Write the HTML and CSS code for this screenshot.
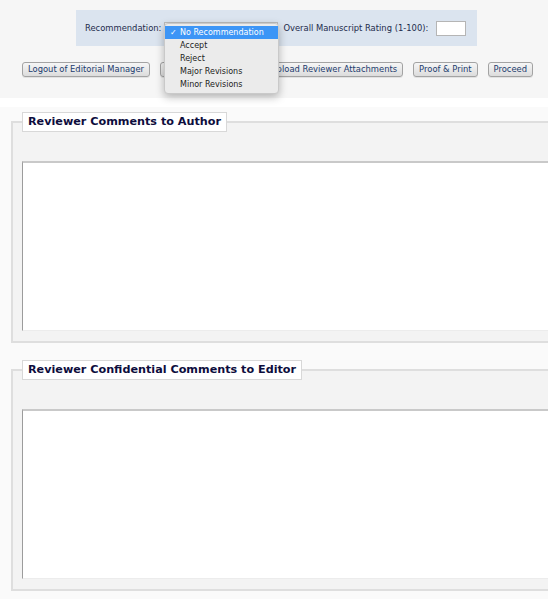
FILE: index.html
```html
<!DOCTYPE html>
<html>
<head>
<meta charset="utf-8">
<link rel="stylesheet" href="styles.css">
</head>
<body>
<div class="header">
  <div class="rec-bar">
    <span class="label">Recommendation:</span>
    <select class="rec-select"><option>No Recommendation</option></select>
    <span class="label rating-label">Overall Manuscript Rating (1-100):</span>
    <input class="rating" type="text">
  </div>
  <div class="btn-row">
    <button class="btn">Logout of Editorial Manager</button>
    <button class="btn btn-narrow">Save &amp; Submit Later</button>
    <button class="btn">Upload Reviewer Attachments</button>
    <button class="btn">Proof &amp; Print</button>
    <button class="btn">Proceed</button>
  </div>
  <div class="menu">
    <div class="item selected"><span class="check">✓</span>No Recommendation</div>
    <div class="item">Accept</div>
    <div class="item">Reject</div>
    <div class="item">Major Revisions</div>
    <div class="item">Minor Revisions</div>
  </div>
</div>
<div class="gap"></div>
<div class="content">
  <fieldset class="box">
    <legend class="title">Reviewer Comments to Author</legend>
    <textarea class="comments"></textarea>
  </fieldset>
  <fieldset class="box">
    <legend class="title">Reviewer Confidential Comments to Editor</legend>
    <textarea class="comments"></textarea>
  </fieldset>
</div>
</body>
</html>
```
FILE: styles.css
```css
html, body {
  margin: 0;
  padding: 0;
  overflow: hidden;
  background: #fafafa;
  font-family: "DejaVu Sans", Verdana, sans-serif;
}
.header {
  position: relative;
  height: 98px;
  background: #f6f6f6;
  padding-top: 10px;
  box-sizing: border-box;
}
.rec-bar {
  margin-left: 76px;
  width: 401px;
  height: 36px;
  box-sizing: border-box;
  background: #dbe4ef;
  display: flex;
  align-items: center;
  padding: 0 10px 0 9px;
}
.label {
  font-size: 8.4px;
  color: #1d2b4c;
  white-space: nowrap;
}
.rec-select {
  width: 114px;
  height: 12px;
  margin-left: 3px;
  font-size: 8px;
  padding: 0;
  border: 1px solid #bbb;
}
.rating-label {
  margin-left: 5px;
}
.rating {
  width: 30px;
  height: 15px;
  box-sizing: border-box;
  margin-left: 8px;
  border: 1px solid #b5b5b5;
  background: #fff;
  padding: 0;
}
.btn-row {
  display: flex;
  gap: 10px;
  margin: 16px 0 0 22px;
}
.btn {
  font-family: "DejaVu Sans", Verdana, sans-serif;
  font-size: 8.4px;
  color: #1b3b6e;
  height: 15px;
  padding: 0 5px;
  border: 1px solid #a3a3a3;
  border-radius: 3px;
  background: linear-gradient(#f6f6f6, #dcdcdc);
  box-shadow: 0 1px 0 rgba(0,0,0,0.08);
  white-space: nowrap;
  line-height: 13px;
}
.btn-narrow {
  padding: 0 3px;
}
.menu {
  position: absolute;
  left: 164px;
  top: 23px;
  width: 115px;
  height: 71px;
  box-sizing: border-box;
  padding-top: 2px;
  background: #ebebeb;
  border: 1px solid #c9c9c9;
  border-radius: 4px;
  box-shadow: 0 3px 9px rgba(0,0,0,0.28);
  font-size: 8px;
  color: #222;
}
.item {
  height: 13px;
  line-height: 13px;
  padding-left: 15px;
  position: relative;
}
.item.selected {
  background: #3c95f6;
  color: #fff;
}
.check {
  position: absolute;
  left: 5px;
  top: 0;
  font-weight: bold;
}
.gap {
  height: 9px;
  background: #fff;
}
.content {
  width: 760px;
  padding: 5px 0 1px 11px;
}
.box {
  margin: 0 0 17px 0;
  padding: 0 0 10px 9px;
  border: 2px solid #dedede;
  background: #f3f3f3;
  min-width: 0;
}
.title {
  padding: 0 5px;
  height: 20px;
  box-sizing: border-box;
  line-height: 18px;
  background: #fff;
  border: 1px solid #d8d8d8;
  font-size: 11.2px;
  font-weight: bold;
  color: #0d0d3d;
}
.comments {
  display: block;
  margin-top: 29px;
  width: 700px;
  height: 170px;
  box-sizing: border-box;
  border-style: solid;
  border-width: 2px 1px 1px 1px;
  border-color: #c9c9c9 #ddd #ececec #9c9c9c;
  background: #fff;
  resize: none;
}
```
